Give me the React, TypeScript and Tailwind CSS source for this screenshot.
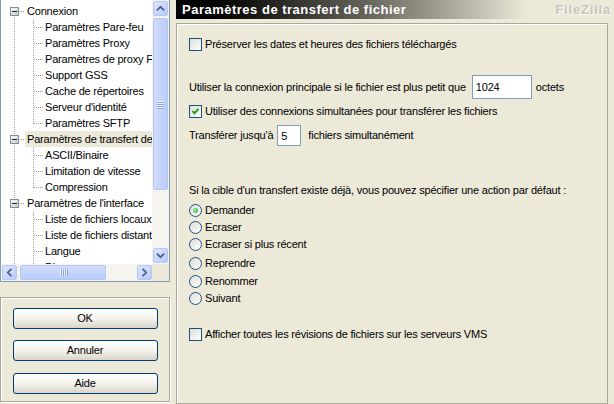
import React from 'react';

type TreeRow = {
  label: string;
  level: 0 | 1;
  first?: boolean;
  last?: boolean;
  selected?: boolean;
};

const rows: TreeRow[] = [
  { label: 'Connexion', level: 0, first: true },
  { label: 'Paramètres Pare-feu', level: 1 },
  { label: 'Paramètres Proxy', level: 1 },
  { label: 'Paramètres de proxy FTP', level: 1 },
  { label: 'Support GSS', level: 1 },
  { label: 'Cache de répertoires', level: 1 },
  { label: "Serveur d'identité", level: 1 },
  { label: 'Paramètres SFTP', level: 1, last: true },
  { label: 'Paramètres de transfert de fichier', level: 0, selected: true },
  { label: 'ASCII/Binaire', level: 1 },
  { label: 'Limitation de vitesse', level: 1 },
  { label: 'Compression', level: 1, last: true },
  { label: "Paramètres de l'interface", level: 0 },
  { label: 'Liste de fichiers locaux', level: 1 },
  { label: 'Liste de fichiers distants', level: 1 },
  { label: 'Langue', level: 1 },
  { label: 'Divers', level: 1 },
];

const radios = [
  { label: 'Demander', checked: true, mt: 'mt-[6px]' },
  { label: 'Ecraser', mt: 'mt-[3px]' },
  { label: 'Ecraser si plus récent', mt: 'mt-[3px]' },
  { label: 'Reprendre', mt: 'mt-[5px]' },
  { label: 'Renommer', mt: 'mt-[4px]' },
  { label: 'Suivant', mt: 'mt-[3px]' },
];

const dot = '#a0a0a0';

function Connector({ row }: { row: TreeRow }) {
  if (row.level === 0) {
    return (
      <svg width="24" height="16" className="shrink-0" shapeRendering="crispEdges">
        <line x1="13.5" y1={row.first ? 8 : 0} x2="13.5" y2="16" stroke={dot} strokeDasharray="1 1" />
        <line x1="18" y1="8.5" x2="24" y2="8.5" stroke={dot} strokeDasharray="1 1" />
        <defs>
          <linearGradient id="boxg" x1="0" y1="0" x2="1" y2="1">
            <stop offset="0" stopColor="#ffffff" />
            <stop offset="1" stopColor="#c9c6b5" />
          </linearGradient>
        </defs>
        <rect x="9.5" y="4.5" width="8" height="8" fill="url(#boxg)" stroke="#7a8fa3" />
        <line x1="11" y1="8.5" x2="16" y2="8.5" stroke="#1f2a3a" />
      </svg>
    );
  }
  return (
    <svg width="42" height="16" className="shrink-0" shapeRendering="crispEdges">
      <line x1="13.5" y1="0" x2="13.5" y2="16" stroke={dot} strokeDasharray="1 1" />
      <line x1="32.5" y1="0" x2="32.5" y2={row.last ? 9 : 16} stroke={dot} strokeDasharray="1 1" />
      <line x1="33" y1="8.5" x2="42" y2="8.5" stroke={dot} strokeDasharray="1 1" />
    </svg>
  );
}

function Arrow({ dir }: { dir: 'up' | 'down' | 'left' | 'right' }) {
  const paths = {
    up: 'M4 9 L7.5 5.5 L11 9',
    down: 'M4 6 L7.5 9.5 L11 6',
    left: 'M9 4 L5.5 7.5 L9 11',
    right: 'M6 4 L9.5 7.5 L6 11',
  };
  return (
    <div className="w-[15px] h-[15px] rounded-[2px] border border-[#b5c6f0] bg-linear-to-br from-[#dde6fe] to-[#b7c9f7] flex items-center justify-center shrink-0">
      <svg width="15" height="15" viewBox="0 0 15 15">
        <path d={paths[dir]} stroke="#4d6185" strokeWidth="2" fill="none" strokeLinecap="square" />
      </svg>
    </div>
  );
}

function Grip({ vertical }: { vertical?: boolean }) {
  return (
    <div className={vertical ? 'flex flex-col gap-[1px]' : 'flex gap-[1px]'}>
      {[0, 1, 2, 3].map(i => (
        <span key={i} className={vertical ? 'w-[7px] h-px bg-[#eef3ff] shadow-[0_1px_0_#8ca6e0]' : 'w-px h-[7px] bg-[#eef3ff] shadow-[1px_0_0_#8ca6e0]'} />
      ))}
    </div>
  );
}

function Check({ checked }: { checked?: boolean }) {
  return (
    <span className="w-[13px] h-[13px] border border-[#1c5180] bg-linear-to-br from-[#dcdcd7] to-white shrink-0 flex items-center justify-center">
      {checked && (
        <svg width="9" height="9" viewBox="0 0 9 9">
          <path d="M1.5 4 L3.5 6.2 L7.5 1.8" stroke="#21a121" strokeWidth="2" fill="none" />
        </svg>
      )}
    </span>
  );
}

function Radio({ checked }: { checked?: boolean }) {
  return (
    <span className="w-[13px] h-[13px] rounded-full border border-[#1c5180] bg-linear-to-br from-[#dcdcd7] to-white shrink-0 flex items-center justify-center">
      {checked && <span className="w-[5px] h-[5px] rounded-full bg-[radial-gradient(circle_at_40%_40%,#9ff49f,#21a121)]" />}
    </span>
  );
}

function XpButton({ label }: { label: string }) {
  return (
    <button className="w-[145px] h-[21px] rounded-[3px] border border-[#003c74] bg-linear-to-b from-white via-[#f4f3ee] to-[#d9d5c9] text-[11px] text-black flex items-center justify-center">
      {label}
    </button>
  );
}

export default function App() {
  return (
    <div className="w-[614px] h-[404px] bg-[#ece9d8] flex overflow-hidden text-[11px] tracking-[-0.2px] text-black" style={{ fontFamily: '"Liberation Sans", Arial, sans-serif' }}>
      {/* Left: tree + buttons */}
      <div className="w-[170px] flex flex-col shrink-0">
        <div className="h-[282px] border-x border-b border-[#7f9db9] bg-white flex flex-col">
          <div className="h-[264px] flex">
            <div className="w-[151px] overflow-hidden pt-[3px]">
              {rows.map((row, i) => (
                <div key={i} className="h-[16px] flex items-center whitespace-nowrap">
                  <Connector row={row} />
                  <span className={'px-[2px] h-[16px] leading-[16px] ' + (row.selected ? 'bg-[#ece9d8]' : '')}>{row.label}</span>
                </div>
              ))}
            </div>
            {/* vertical scrollbar */}
            <div className="w-[17px] bg-[#f5f4ef] flex flex-col items-center pt-[1px] pb-px">
              <Arrow dir="up" />
              <div className="mt-[2px] w-[15px] h-[172px] rounded-[2px] border border-[#b5c6f0] bg-linear-to-r from-[#cfdcfd] to-[#bccdf9] flex items-center justify-center">
                <Grip vertical />
              </div>
              <div className="flex-1" />
              <Arrow dir="down" />
            </div>
          </div>
          {/* horizontal scrollbar */}
          <div className="h-[17px] flex">
            <div className="w-[151px] bg-[#f5f4ef] flex items-center pl-px">
              <Arrow dir="left" />
              <div className="ml-[3px] w-[86px] h-[15px] rounded-[2px] border border-[#b5c6f0] bg-linear-to-b from-[#cfdcfd] to-[#bccdf9] flex items-center justify-center">
                <Grip />
              </div>
              <div className="flex-1" />
              <Arrow dir="right" />
            </div>
            <div className="w-[17px] bg-[#ece9d8]" />
          </div>
        </div>

        <div className="mt-[15px] h-[105px] border border-[#aca899] shadow-[inset_1px_1px_0_#fff,1px_1px_0_#fff] flex flex-col items-center pt-[10px]">
          <XpButton label="OK" />
          <div className="mt-[11px]"><XpButton label="Annuler" /></div>
          <div className="mt-[12px]"><XpButton label="Aide" /></div>
        </div>
      </div>

      {/* Right: settings page */}
      <div className="ml-[6px] flex-1 min-w-0 flex flex-col">
        <div className="h-[19px] bg-linear-to-r from-black to-[#ece9d8] to-80% flex items-center justify-between pl-[6px] pr-[3px]">
          <span className="text-white font-bold text-[13px] tracking-[0.5px]">Paramètres de transfert de fichier</span>
          <span className="text-[#c6c5bd] font-bold text-[13px] tracking-[0.8px] [text-shadow:1px_1px_0_#fbfaf6]">FileZilla</span>
        </div>

        <div className="mt-[4px] w-[432px] h-[381px] border border-[#aca899] shadow-[inset_1px_1px_0_#fff] pl-[12px] flex flex-col">
          <label className="mt-[13px] h-[14px] flex items-center gap-[3px]">
            <Check />
            <span>Préserver les dates et heures des fichiers téléchargés</span>
          </label>

          <div className="mt-[24px] h-[24px] flex items-center">
            <span>Utiliser la connexion principale si le fichier est plus petit que</span>
            <div className="ml-[6px] w-[60px] h-[24px] border border-[#7f9db9] bg-white pl-[3px] pt-[3px]">1024</div>
            <span className="ml-[4px]">octets</span>
          </div>

          <label className="mt-[5px] h-[14px] flex items-center gap-[3px]">
            <Check checked />
            <span>Utiliser des connexions simultanées pour transférer les fichiers</span>
          </label>

          <div className="mt-[7px] h-[21px] flex items-center">
            <span>Transférer jusqu'à</span>
            <div className="ml-[4px] w-[24px] h-[21px] border border-[#7f9db9] bg-white pl-[3px] pt-[2px]">5</div>
            <span className="ml-[7px]">fichiers simultanément</span>
          </div>

          <div className="mt-[37px] h-[14px] flex items-center">
            Si la cible d'un transfert existe déjà, vous pouvez spécifier une action par défaut :
          </div>

          {radios.map(r => (
            <label key={r.label} className={r.mt + ' h-[14px] flex items-center gap-[3px]'}>
              <Radio checked={r.checked} />
              <span>{r.label}</span>
            </label>
          ))}

          <label className="mt-[22px] h-[14px] flex items-center gap-[3px]">
            <Check />
            <span>Afficher toutes les révisions de fichiers sur les serveurs VMS</span>
          </label>
        </div>
      </div>
    </div>
  );
}
